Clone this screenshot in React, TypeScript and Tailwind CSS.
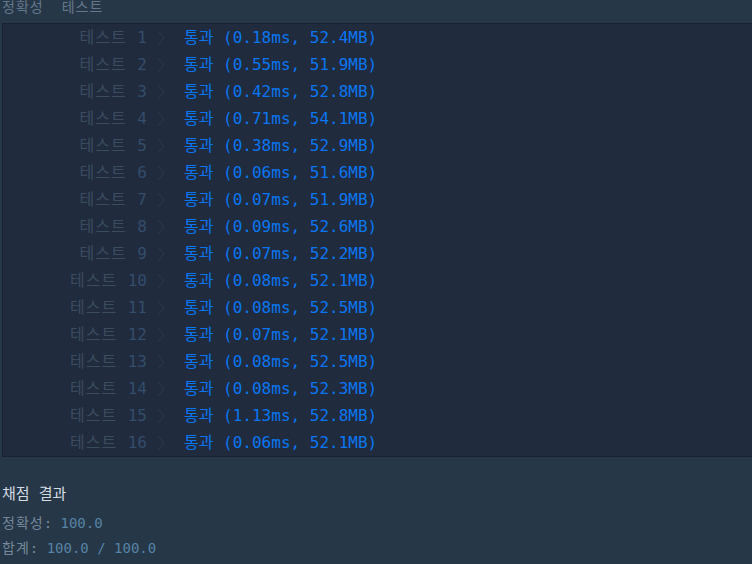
const rows: [number, string, string][] = [
  [1, "0.18ms", "52.4MB"],
  [2, "0.55ms", "51.9MB"],
  [3, "0.42ms", "52.8MB"],
  [4, "0.71ms", "54.1MB"],
  [5, "0.38ms", "52.9MB"],
  [6, "0.06ms", "51.6MB"],
  [7, "0.07ms", "51.9MB"],
  [8, "0.09ms", "52.6MB"],
  [9, "0.07ms", "52.2MB"],
  [10, "0.08ms", "52.1MB"],
  [11, "0.08ms", "52.5MB"],
  [12, "0.07ms", "52.1MB"],
  [13, "0.08ms", "52.5MB"],
  [14, "0.08ms", "52.3MB"],
  [15, "1.13ms", "52.8MB"],
  [16, "0.06ms", "52.1MB"],
];

const mono = {
  fontFamily: '"DejaVu Sans Mono", "Noto Sans CJK KR", monospace',
};

const Chevron = () => (
  <svg width="8" height="16" viewBox="0 0 8 16" className="shrink-0">
    <polyline
      points="1,1 7,8 1,15"
      fill="none"
      stroke="#2c3b4d"
      strokeWidth="1"
    />
  </svg>
);

export default function App() {
  return (
    <div className="w-[752px] h-[564px] overflow-hidden bg-[#263747]" style={mono}>
      <div className="h-[23px] flex gap-[18px] pl-[2px] text-[14px] leading-[14px] text-[#65788a]">
        <span className="tracking-[1px]">정확성</span>
        <span className="tracking-[1px]">테스트</span>
      </div>

      <div className="ml-[2px] border border-r-0 border-[#172130] bg-[#202b3d]">
        {rows.map(([n, time, mem]) => (
          <div key={n} className="h-[27px] flex items-center text-[16px] leading-[27px]">
            <div className="w-[144px] text-right whitespace-pre">
              <span className="text-[#3b4c5f] tracking-[1px]">테스트 </span>
              <span className="text-[#334d6b]">{n}</span>
            </div>
            <div className="w-[37px] pl-[10px] flex items-center">
              <Chevron />
            </div>
            <div className="text-[#0a76f2] whitespace-pre">
              통과 ({time}, {mem})
            </div>
          </div>
        ))}
      </div>

      <div className="pl-[2px] pt-[26px]">
        <div className="text-[15px] leading-[22px] text-[#d4dce3]">채점 결과</div>
        <div className="mt-[6px] text-[14px] leading-[25px] text-[#74889a]">
          <span className="tracking-[1px]">정확성</span>: <span className="text-[#5683a6]">100.0</span>
        </div>
        <div className="text-[14px] leading-[25px] text-[#74889a]">
          <span className="tracking-[1px]">합계</span>: <span className="text-[#5683a6]">100.0 / 100.0</span>
        </div>
      </div>
    </div>
  );
}
